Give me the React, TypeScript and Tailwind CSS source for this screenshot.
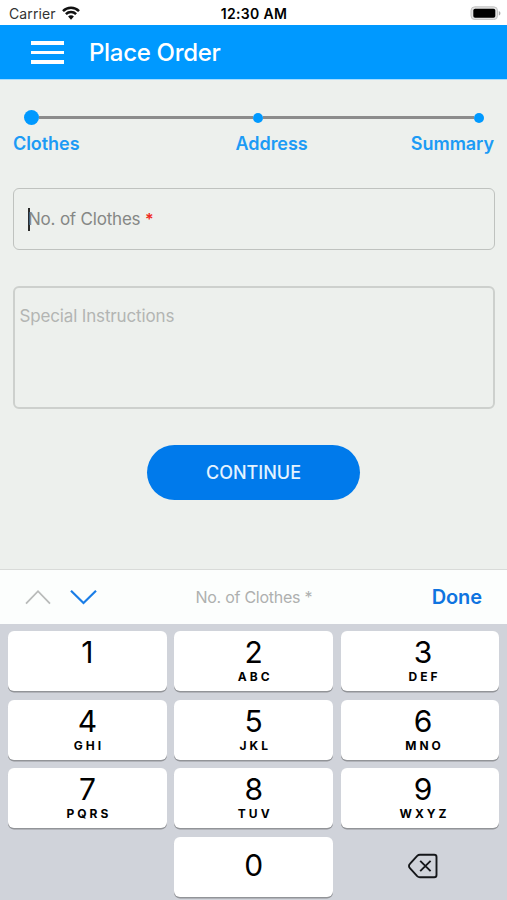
import React from "react";

const KEYS: { digit: string; letters: string }[] = [
  { digit: "1", letters: "" },
  { digit: "2", letters: "ABC" },
  { digit: "3", letters: "DEF" },
  { digit: "4", letters: "GHI" },
  { digit: "5", letters: "JKL" },
  { digit: "6", letters: "MNO" },
  { digit: "7", letters: "PQRS" },
  { digit: "8", letters: "TUV" },
  { digit: "9", letters: "WXYZ" },
];

function StatusBar() {
  return (
    <div className="grid h-[25px] grid-cols-3 items-center bg-white pt-[2px] pr-[6px] pl-[9px] text-black">
      <div className="flex items-center gap-[6px]">
        <span className="text-[14px] leading-[18px] tracking-[0.1px] text-[#333]">Carrier</span>
        <svg className="-mt-[2px] h-[14px] w-[18px]" viewBox="0 0 18 14" fill="none" stroke="#111" strokeWidth="2.5">
          <path d="M1 5.1a11.3 11.3 0 0 1 16 0" />
          <path d="M3.9 8.2a7.2 7.2 0 0 1 10.2 0" />
          <path d="M9 13.8 6.1 10.6a4 4 0 0 1 5.8 0z" fill="#111" stroke="none" />
        </svg>
      </div>
      <span className="pr-[2px] text-center text-[14px] leading-[18px] font-semibold tracking-[0.35px] whitespace-nowrap">12:30 AM</span>
      <svg className="-mt-[2px] h-[14px] w-[31px] justify-self-end" viewBox="0 0 31 14">
        <rect x="1" y="0.8" width="26.5" height="12.8" rx="3.8" fill="#e2e2e2" stroke="#c4c4c4" />
        <rect x="3.3" y="2.7" width="22" height="9" rx="1.8" fill="#000" />
        <path d="M28.8 5v4.6c2.2-.8 2.2-3.8 0-4.6z" fill="#aaa" />
      </svg>
    </div>
  );
}

function Header() {
  return (
    <header className="flex h-[54px] items-center bg-[#0099ff] pl-[30.5px]">
      <div className="flex w-[33.5px] flex-col gap-[5.5px] pt-[1px]">
        <span className="h-[3.7px] bg-white" />
        <span className="h-[3.7px] bg-white" />
        <span className="h-[3.7px] bg-white" />
      </div>
      <h1 className="ml-[25px] pt-[2px] text-[24px] leading-[30px] font-medium tracking-[-0.3px] text-white">Place Order</h1>
    </header>
  );
}

function Steps() {
  return (
    <section className="pt-[30px]">
      <div className="mr-[23px] ml-[24.4px] flex h-[15px] items-center">
        <span className="size-[15px] rounded-full bg-[#0099ff]" />
        <span className="h-[2.5px] flex-1 bg-[#8c8c8c]" />
        <span className="size-[10px] rounded-full bg-[#0099ff]" />
        <span className="h-[2.5px] w-[211px] bg-[#8c8c8c]" />
        <span className="size-[10px] rounded-full bg-[#0099ff]" />
      </div>
      <div className="mt-[7px] flex px-[13px] text-[18px] leading-[24px] font-semibold tracking-[-0.05px] text-[#1c9bf5]">
        <span className="w-[222.5px]">Clothes</span>
        <span className="flex-1">Address</span>
        <span>Summary</span>
      </div>
    </section>
  );
}

function Toolbar() {
  return (
    <div className="flex h-[55px] items-center border-t border-[#d9dbd9] bg-[#fcfefd] pr-[25px] pl-[25px]">
      <svg className="h-[16px] w-[73px]" viewBox="0 0 73 16" fill="none">
        <path d="M1 14.7 13 2.2 25 14.7" stroke="#b9bbba" strokeWidth="1.8" />
        <path d="M46 1.7 58.5 14 71 1.7" stroke="#1a7de6" strokeWidth="2.2" />
      </svg>
      <span className="flex-1 pl-[50px] text-center text-[16px] leading-[20px] tracking-[-0.25px] text-[#aeb0af]">No. of Clothes *</span>
      <button className="ml-[72px] text-[20px] leading-[24px] font-semibold tracking-[-0.1px] text-[#0f74e0]">Done</button>
    </div>
  );
}

function Key({ digit, letters }: { digit: string; letters: string }) {
  return (
    <button className="flex h-[60px] flex-col items-center rounded-[6px] bg-white pt-[6px] text-black shadow-[0_1.5px_0_#929498] nth-[3n]:pl-[6px]">
      <span className="text-[30px] leading-[31px]">{digit}</span>
      <span className="pl-[3px] text-[12px] leading-[18px] font-bold tracking-[3px]">{letters}</span>
    </button>
  );
}

function Keypad() {
  return (
    <div className="grid flex-1 grid-cols-3 content-start gap-x-[7.5px] gap-y-[8.6px] bg-[#d0d3da] pt-[7px] pr-[7.5px] pl-[8px]">
      {KEYS.map((k) => (
        <Key key={k.digit} digit={k.digit} letters={k.letters} />
      ))}
      <span />
      <button className="flex h-[60px] items-center justify-center rounded-[6px] bg-white pb-[3px] text-[30px] leading-[30px] text-black shadow-[0_1.5px_0_#929498]">
        0
      </button>
      <div className="flex h-[60px] items-center justify-center pb-[2px] pl-[6px]">
        <svg className="h-[26px] w-[30px]" viewBox="0 0 30 26" fill="none" stroke="#15171a" strokeWidth="1.9" strokeLinejoin="round">
          <path d="M12 1.8H26.2a2.3 2.3 0 0 1 2.3 2.3v17.8a2.3 2.3 0 0 1-2.3 2.3H12a4 4 0 0 1-2.8-1.1L1.9 15.2a3.1 3.1 0 0 1 0-4.4L9.2 2.9A4 4 0 0 1 12 1.8z" />
          <path d="m12.2 7.8 10.4 10.4M22.6 7.8 12.2 18.2" />
        </svg>
      </div>
    </div>
  );
}

export default function App() {
  return (
    <div className="flex h-[900px] w-[507px] flex-col overflow-hidden bg-[#edf0ed] font-['Inter','Liberation_Sans',sans-serif]">
      <StatusBar />
      <Header />
      <main className="flex h-[490px] flex-col border-t border-[#a5dcff]">
        <Steps />
        <div className="mx-[12.5px] mt-[32px] flex h-[62px] items-center rounded-[6px] border-[1.5px] border-[#bfc2bf] pl-[14.5px]">
          <span className="h-[23px] w-[2px] bg-[#2b2b2b]" />
          <span className="-ml-[2px] text-[17px] leading-[22px] tracking-[-0.2px] text-[#858785]">
            No. of Clothes <span className="text-[16px] font-semibold text-[#f02a22]">*</span>
          </span>
        </div>
        <div className="mx-[12.5px] mt-[35.5px] h-[123px] rounded-[6px] border-2 border-[#cdd0cd] pt-[16px] pl-[5px] text-[17px] leading-[24px] tracking-[-0.15px] text-[#b3b5b3]">
          Special Instructions
        </div>
        <button className="mt-[36px] h-[55px] w-[213px] self-center rounded-full bg-[#007aeb] pt-[2px] text-[18px] leading-[24px] font-medium text-[#e4f3ff]">
          CONTINUE
        </button>
      </main>
      <Toolbar />
      <Keypad />
    </div>
  );
}
